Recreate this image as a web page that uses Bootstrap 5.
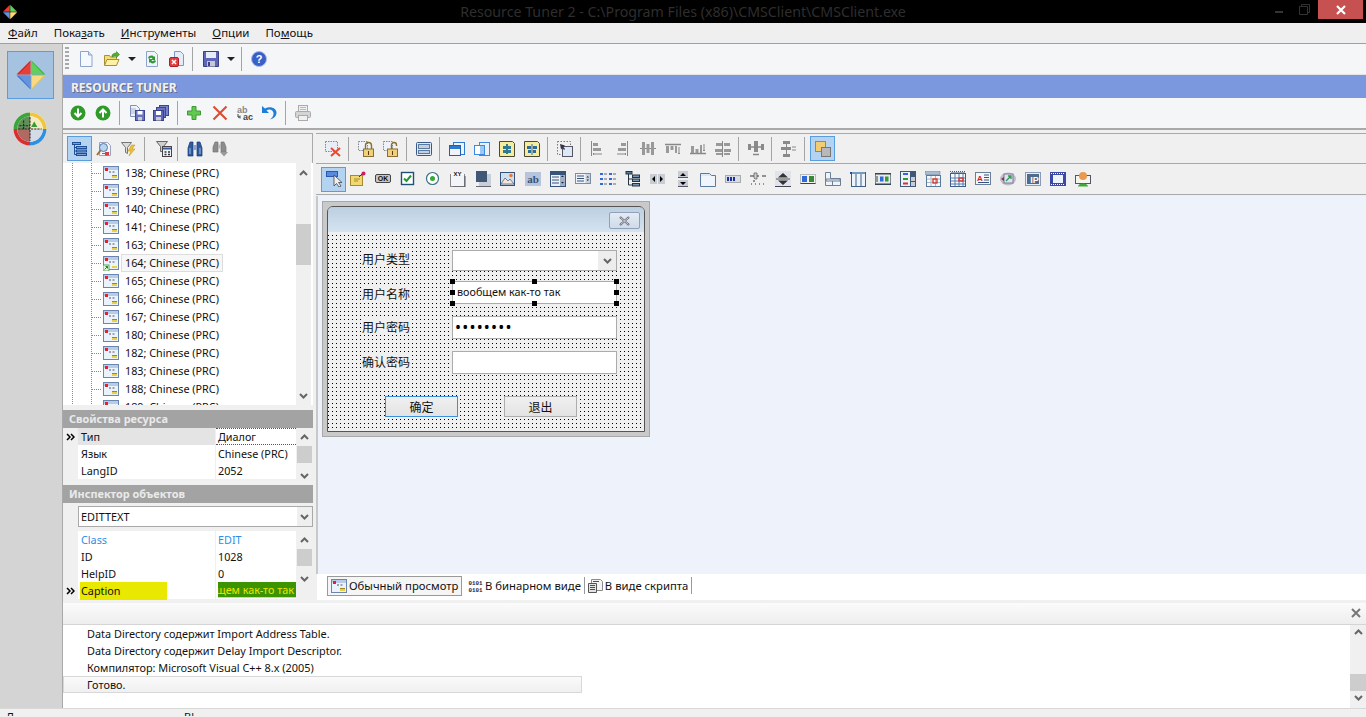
<!DOCTYPE html>
<html lang="ru">
<head>
<meta charset="utf-8">
<title>Resource Tuner 2</title>
<link href="https://cdn.jsdelivr.net/npm/bootstrap@5.3.0/dist/css/bootstrap.min.css" rel="stylesheet">
<style>
html,body{height:717px;overflow:hidden}
body{font:10.9px/1.2 "Noto Sans","Noto Sans CJK SC",sans-serif;color:#111;background:#f0f0f0}
svg{display:block;flex:none}
.ic{width:16px;height:16px}
.g2{margin-left:2px}.g3{margin-left:3px}.g4{margin-left:4px}.g5{margin-left:5px}.g6{margin-left:6px}.g7{margin-left:7px}.g8{margin-left:8px}.g9{margin-left:9px}.g10{margin-left:10px}.g11{margin-left:11px}
.titlebar{height:23px;background:#000;color:#2e2e2e;font-size:14.2px;position:relative}
.titlebar .ttl{width:100%;text-align:center;line-height:23px}
.winbtns{position:absolute;right:3px;top:0;display:flex;align-items:flex-start}
.wclose{width:45px;height:19px;background:#c75050;display:flex;align-items:center;justify-content:center}
.menubar{height:21px;background:#efefef;border-bottom:1px solid #a0a0a0;font-size:11.5px;padding-left:8px;gap:16px;align-items:center}
.menubar span{color:#111}
.menubar u{text-underline-offset:1px}
.appbody{height:665px}
.rail{width:63px;background:#d4d4d4;border-right:1px solid #a9a9a9;padding-top:7px}
.railbtn{width:47px;height:48px;margin-left:7px;background:#a5c3e0;border:1px solid #5a9ddd;display:flex;align-items:center;justify-content:center}
.railgauge{margin:13px 0 0 13px}
.tb1{height:31px;background:#f5f6f8;border-bottom:1px solid #e4e4e4}
.grip{width:4px;height:24px;background:repeating-linear-gradient(#a8a8a8 0 2px,transparent 2px 4px)}
.sepv{width:1px;height:24px;background:#a4a4a4;flex:none}
.arr{width:0;height:0;border:4px solid transparent;border-top:4px solid #222;border-bottom:0;flex:none}
.bluehead{height:23px;background:#7b97dd;color:#f3f3ea;font-weight:700;font-size:12px;line-height:25px;padding-left:8px;text-shadow:1px 1px 0 #6a6a80}
.tb2{height:32px;background:#f5f6f8;border-bottom:2px solid #a9a9a9}
.mainrow{height:473px;background:#f0f0f0}
.leftp{width:250px}
.rightp{width:1050px;margin-left:3px}
.tb3{height:30px;margin-top:3px;border-top:1px solid #a9a9a9;border-right:1px solid #a9a9a9;background:#f0f0f0}
.actbtn{width:25px;height:25px;background:#b4d3f0;border:1px solid #5a9ddd;display:flex;align-items:center;justify-content:center;flex:none}
.tree{height:242px;background:#fff;overflow:hidden;position:relative}
.treelist{width:233px;padding-top:1px;height:242px;overflow:hidden;background:repeating-linear-gradient(#8a8a8a 0 1px,#fff 1px 2px) 9px 0/1px 100% no-repeat,repeating-linear-gradient(#8a8a8a 0 1px,#fff 1px 2px) 28px 0/1px 100% no-repeat}
.trow{height:18px;display:flex;align-items:center}
.trow .dash{width:9px;margin:0 2px 0 29px;border-top:1px dotted #888}
.trow .nm{margin-left:2px;padding:0 3px;border:1px solid transparent;line-height:16px;white-space:nowrap;font-size:10.8px}
.trow .sel{background:#f7f7f7;border-color:#ddd}
.sb{width:15px;background:#f0f0f0;display:flex;flex-direction:column;align-items:center;flex:none;margin-left:auto;margin-right:1px}
.sb .th{width:100%;background:#cdcdcd}
.chev{width:9px;height:6px}
.sb-tree{margin-right:2px}
.th-tree{height:41px;margin:48px 0 128px}
.sb-tree .chev:first-child{margin-top:7px}
.panelhd{height:18px;background:#a3a3a3;color:#eaeaea;font-weight:700;line-height:18px;padding-left:6px}
.gap5{height:5px}
.gap6{height:6px}
.pgrid{background:#f0f0f0;font-size:10.8px}
.prow{height:17px;display:flex;align-items:center;line-height:17px}
.pind{width:15px;padding-left:3px;flex:none}
.pname{width:137px;background:#fff;padding-left:3px;height:17px;flex:none}
.pval{width:80px;background:#fff;margin-left:1px;padding-left:2px;height:17px;flex:none;white-space:nowrap;overflow:hidden}
.phead{background:#e4e4e4}
.pdot{border-top:1px dotted #555;border-bottom:1px dotted #555;line-height:15px}
.pblue{color:#2d8ee8}
.sb-grid{height:51px}
.sb-grid .chev:first-child{margin-top:6px}
.th-g{height:17px;margin:6px 0 10px}
.combo{height:21px;margin:3px 0 4px 15px;background:#fff;border:1px solid #a9a9a9;display:flex;align-items:center;padding-left:2px;font-size:10.9px}
.combobtn{margin-left:auto;width:15px;height:100%;background:#efefef;display:flex;align-items:center;justify-content:center}
.capname{background:#e8e800;width:87px;height:18px;padding-left:1px;margin-left:-1px;display:block}
.capval{background:#3c9400;color:#e8e800;width:78px;display:flex;justify-content:flex-end;height:16px;line-height:15px;overflow:hidden;white-space:nowrap;border-bottom:1px solid #e8e800;padding-right:2px}
.tb4,.tb5{background:#f0f0f0;border-top:1px solid #a9a9a9;align-items:center}
.tb4{height:30px;margin-top:3px}
.tb5{border-bottom:1px solid #a9a9a9;height:32px}
.canvas{height:378px;margin-top:1px;background:#eef2fa;border-left:2px solid #c8c8c8;position:relative}
.dlgframe{position:absolute;left:4px;top:5px;width:328px;height:236px;border:1px solid #a8a8a8;padding:4px;background:#c9c9c9}
.dlg{position:relative;height:226px;border:1px solid #555;border-radius:6px 6px 0 0;background:#f0f0f0 conic-gradient(at 1px 1px,#f0f0f0 75%,#000 0) 0 0/4px 4px;overflow:hidden}
.dlgtitle{height:25px;background:linear-gradient(#bccfe0,#d5e3f0)}
.dlgx{position:absolute;left:281px;top:5px;width:31px;height:17px;border:1px solid #8fa0b8;border-radius:2px;background:linear-gradient(#e4ebf3,#cfdbe8);display:flex;align-items:center;justify-content:center}
.lbl{position:absolute;left:34px;font-size:12px;line-height:16px;background:#f0f0f0;color:#111;font-family:"Noto Sans CJK SC",sans-serif;white-space:nowrap}
.fld{position:absolute;left:124px;width:165px;height:23px;background:#fff;border:1px solid #ababab;font-size:10.8px;line-height:20px;padding-left:4px}
.cmb{height:21px;display:flex;justify-content:flex-end}
.cmbb{width:18px;background:#ededed;display:flex;align-items:center;justify-content:center}
.dots{letter-spacing:1.2px;font-size:16px;line-height:20px;padding-left:2px;color:#000}
.btnx{position:absolute;width:73px;height:21px;top:189px;border:1px solid #adadad;background:linear-gradient(#f0f0f0,#e3e3e3);font:12px/19px "Noto Sans CJK SC",sans-serif;text-align:center;color:#111}
.btnok{left:57px;border-color:#3c8fdc}
.btnno{left:176px}
.hnd{position:absolute;width:5px;height:5px;background:#000}
.tabs{height:26px;background:#fff;margin-left:1px;padding:2px 0 0 10px;font-size:11.3px;align-items:flex-start}
.tabi{height:20px;display:flex;align-items:center;gap:2px;padding:0 3px;white-space:nowrap;flex:none}
.tabon{background:#f5f5f5;border:1px solid #9a9a9a;width:135px}
.tabt{border-right:1px solid #9a9a9a;height:17px;margin-top:1px;gap:1px}
.bottomp{height:106px;background:#fff}
.loghead{height:22px;background:linear-gradient(#fbfbfb,#eeeeee);border-bottom:1px solid #d5d5d5;position:relative}
.logx{position:absolute;right:3px;top:5px}
.logbody{height:84px}
.loglines{flex:1;position:relative}
.lline{height:17px;line-height:17px;padding-left:24px;white-space:nowrap}
.lcur{width:519px;height:17px;background:linear-gradient(#fafafa,#f0f0f0);border:1px solid #d8d8d8;line-height:15px;padding-left:23px}
.logsb{width:16px;background:#f0f0f0;display:flex;flex-direction:column;align-items:center;flex:none}
.logsb .chev:first-child{margin-top:4px}
.th-l{width:100%;height:17px;background:#cdcdcd;margin-top:39px}
.statusb{height:8px;background:#f0f0f0;border-top:1px solid #d8d8d8;overflow:hidden;position:relative;font-size:11px;line-height:16px;padding-left:6px;margin-top:-1px}
.statusb span{margin-right:170px}
</style>
</head>
<body>
<svg width="0" height="0" class="position-absolute">
<defs>
<symbol id="dia" viewBox="0 0 32 32"><path d="M15.5 1.5V15.500H1.500Z" fill="#d8201c"/><path d="M16.500 1.500V15.500H30.500Z" fill="#3cb83c"/><path d="M15.500 30.500V16.500H1.500Z" fill="#3f74c8"/><path d="M16.500 30.500V16.500H30.500Z" fill="#f2c24a"/><path d="M15.500 3V15H4Z" fill="#f26a5a" opacity=".45"/><path d="M17 3V15H28Z" fill="#92e88a" opacity=".45"/><path d="M15 29V17H4Z" fill="#8ab4ee" opacity=".5"/><path d="M17 29V17H28Z" fill="#fde9a8" opacity=".6"/></symbol>
<symbol id="gauge" viewBox="0 0 32 32"><circle cx="16" cy="16" r="15.500" fill="#fff"/><path d="M16 .5A15.500 15.500 0 0 0 .5 16H4A12 12 0 0 1 16 4Z" fill="#3aa63a"/><path d="M16 .5A15.500 15.500 0 0 1 31.500 16H28A12 12 0 0 0 16 4Z" fill="#f0c63c"/><path d="M.5 16A15.500 15.500 0 0 0 16 31.500V28A12 12 0 0 1 4 16Z" fill="#d83030"/><path d="M31.500 16A15.500 15.500 0 0 1 16 31.500V28A12 12 0 0 0 28 16Z" fill="#2f8fe0"/><path d="M16 4A12 12 0 0 0 4 16H16Z" fill="#5f9058"/><path d="M16 4A12 12 0 0 1 28 16H16Z" fill="#f4ecc0"/><path d="M4 16A12 12 0 0 0 16 28V16Z" fill="#b06a62"/><path d="M28 16A12 12 0 0 1 16 28V16Z" fill="#d4dbe6"/><path d="M5 16H27M16 5V27M6 13H16M10 8V16" stroke="#222" stroke-width="1" stroke-dasharray="2 1"/><path d="M20 9l3 5h-6z" fill="#3a9a3a"/></symbol>
<symbol id="new" viewBox="0 0 16 16"><path d="M2.500 .5h8l3.500 3.500v11.500h-11.500z" fill="#f4f8ff" stroke="#8ea4cc"/><path d="M10.500 .5v3.500h3.500" fill="#cfdcf2" stroke="#8ea4cc"/></symbol>
<symbol id="open" viewBox="0 0 16 16"><path d="M.5 4.500h5l1 1.500h6v8h-12z" fill="#f4dc78" stroke="#a89030"/><path d="M.5 14.500l2.500-6h12l-2.500 6z" fill="#fff0a8" stroke="#a89030"/><path d="M8 4c2-2 3-2 4.500-2V.5L15.500 3.500 12.500 6.500V5C10.500 5 9.500 5 8 6z" fill="#52b030" stroke="#2b7a18" stroke-width=".5"/></symbol>
<symbol id="refr" viewBox="0 0 16 16"><path d="M2.500 .5h8l3 3v12h-11z" fill="#eef4fc" stroke="#8ea4cc"/><path d="M4 7c1-3 5-3 6-1l1-1v4H7l1.500-1.500C8 6.500 6 6.500 5.500 8zM12 10c-1 3-5 3-6 1l-1 1V8h4l-1.500 1.500C8 10.500 10 10.500 10.500 9z" fill="#2f9a2f"/></symbol>
<symbol id="cdoc" viewBox="0 0 16 16"><path d="M5.500 .5h6l3 3v11h-9z" fill="#e4ecfa" stroke="#7e96c4"/><rect x=".5" y="6.500" width="9" height="9" rx="1.500" fill="#e04040" stroke="#b02020"/><path d="M3 9l4 4M7 9l-4 4" stroke="#fff" stroke-width="1.400"/></symbol>
<symbol id="save" viewBox="0 0 16 16"><path d="M.5 .5h15v15h-15z" fill="#5d66b8" stroke="#3a3f88"/><rect x="3" y="1" width="10" height="6" fill="#e8ecf8"/><rect x="4" y="10" width="8" height="5.500" fill="#c8c8d0"/><rect x="5" y="11" width="2" height="4" fill="#3a3f88"/></symbol>
<symbol id="help" viewBox="0 0 16 16"><circle cx="8" cy="8" r="7.500" fill="#3a5fc8" stroke="#a8b8e8"/><text x="8" y="12" font-size="11" font-weight="700" font-family="Liberation Sans" text-anchor="middle" fill="#fff">?</text></symbol>
<symbol id="gdown" viewBox="0 0 16 16"><circle cx="8" cy="8" r="7.500" fill="#2f9a2a"/><path d="M8 3.500v8M4.500 8 8 11.500 11.500 8" fill="none" stroke="#fff" stroke-width="2"/></symbol>
<symbol id="gup" viewBox="0 0 16 16"><circle cx="8" cy="8" r="7.500" fill="#2f9a2a"/><path d="M8 12.500v-8M4.500 8 8 4.500 11.500 8" fill="none" stroke="#fff" stroke-width="2"/></symbol>
<symbol id="copy1" viewBox="0 0 16 16"><path d="M1.500 .5h6l3 3v8h-9z" fill="#eef2fa" stroke="#8090b8"/><path d="M2 4h5M2 6h6M2 8h6" stroke="#a8b4d0"/><rect x="6.500" y="5.500" width="9" height="10" fill="#6a74c0" stroke="#3e4590"/><rect x="8.500" y="6" width="5" height="3.500" fill="#fff"/><rect x="9" y="12" width="4" height="3.500" fill="#ccc"/></symbol>
<symbol id="copy2" viewBox="0 0 16 16"><rect x="6.500" y=".5" width="9" height="10" fill="#7a82c8" stroke="#3e4590"/><rect x="3.500" y="2.500" width="9" height="10" fill="#6a74c0" stroke="#3e4590"/><rect x=".5" y="5.500" width="10" height="10" fill="#5d66b8" stroke="#3a3f88"/><rect x="3" y="6" width="5" height="4" fill="#fff"/><rect x="3" y="12" width="5" height="3.500" fill="#ccc"/></symbol>
<symbol id="plus" viewBox="0 0 16 16"><path d="M6 1.500h4V6h4.500v4H10v4.500H6V10H1.500V6H6z" fill="#63c850" stroke="#3d9a30"/></symbol>
<symbol id="rx" viewBox="0 0 16 16"><path d="M1.500 1.500l13 13M14.500 1.500l-13 13" stroke="#dd4a30" stroke-width="2"/></symbol>
<symbol id="abc" viewBox="0 0 16 16"><text x="0" y="7.500" font-size="9" font-weight="700" font-family="Liberation Sans" fill="#888">ab</text><text x="6" y="15" font-size="9" font-weight="700" font-family="Liberation Sans" fill="#444">ac</text><path d="M1 9v3h3M3 10.500 1.500 12 3 13.500" fill="none" stroke="#444"/></symbol>
<symbol id="undo" viewBox="0 0 16 16"><path d="M1 1v7h7L5.500 5.500C8 3.500 12 4.500 12.500 8c.3 2.500-1 4.500-3.500 6.500 4-1 6.500-3.500 6.500-7C15.500 3 9 .5 4 3.500z" fill="#1f7fd8"/></symbol>
<symbol id="print" viewBox="0 0 16 16"><rect x="3.500" y=".5" width="9" height="6" fill="#f0f0f0" stroke="#aaa"/><rect x=".5" y="6.500" width="15" height="6" rx="1" fill="#d4d4d4" stroke="#aaa"/><rect x="3.500" y="10.500" width="9" height="5" fill="#f0f0f0" stroke="#aaa"/><path d="M5 2.500h6M5 4.500h6" stroke="#bbb"/></symbol>
<symbol id="treei" viewBox="0 0 16 16"><g fill="#7ba0d8" stroke="#1f4f96"><rect x=".5" y="1.500" width="8" height="2"/><rect x="4.500" y="5.500" width="10" height="2"/><rect x="4.500" y="9" width="10" height="2"/><rect x="4.500" y="12.500" width="10" height="2"/></g><path d="M2.500 3.500v10h2M2.500 6.500h2M2.500 10h2" fill="none" stroke="#1f4f96"/></symbol>
<symbol id="srch" viewBox="0 0 16 16"><path d="M3.500 1.500h8l3 3v10h-11z" fill="#f4f4fa" stroke="#9aa4c0"/><circle cx="7.500" cy="6.500" r="4" fill="#b8d4f0" stroke="#5a7aa8"/><path d="M4.500 9.500 1 14" stroke="#a07038" stroke-width="2"/><rect x="9" y="11" width="4" height="3.500" fill="#d84040"/><path d="M6 12.500h4" stroke="#3a9a3a"/></symbol>
<symbol id="filt" viewBox="0 0 16 16"><path d="M.5 1.500h10l-4 5v6l-2-1v-5z" fill="#dcdcdc" stroke="#777"/><path d="M10.500 4 7 10h3l-2 5 6-7h-3l3-4z" fill="#f0c030" stroke="#c09010" stroke-width=".5"/></symbol>
<symbol id="filt2" viewBox="0 0 16 16"><path d="M.5 .5h11l-4 5v5l-3 0v-5z" fill="#cfcfcf" stroke="#666"/><rect x="6.500" y="5.500" width="9" height="10" fill="#eef2fa" stroke="#444"/><path d="M7 6.500h8v2H7z" fill="#3c5a98"/><path d="M8.500 11h2M12 11h2M8.500 13.500h2M12 13.500h2" stroke="#333" stroke-width="1.400"/></symbol>
<symbol id="bin" viewBox="0 0 16 16"><path d="M1 15V7l2-6h3v14zM15 15V7l-2-6h-3v14z" fill="#2f5a9c" stroke="#123a78" stroke-width=".7"/><rect x="6" y="4" width="4" height="5" fill="#8aa4cc"/><path d="M3 7v6M13 7v6" stroke="#a8c0e8"/></symbol>
<symbol id="bin2" viewBox="0 0 16 16"><path d="M1 11V6l2-5h3v10zM14 11V6l-2-5H9v10z" fill="#8c8c8c" stroke="#777" stroke-width=".7"/><rect x="6" y="3.500" width="3" height="4" fill="#bbb"/><path d="M8 11h8l-4 4.500z" fill="#999"/></symbol>
<symbol id="dx" viewBox="0 0 16 16"><rect x=".5" y=".5" width="12" height="10" fill="#e8eef8" stroke="#888" stroke-dasharray="1.500 1"/><path d="M6 7l9 8M15 7l-9 8" stroke="#e84a30" stroke-width="2"/></symbol>
<symbol id="lock" viewBox="0 0 16 16"><rect x=".5" y=".5" width="9" height="9" fill="#eef2fa" stroke="#888" stroke-dasharray="1.500 1"/><path d="M7.500 8V4.500a3 3 0 0 1 6 0V8" fill="none" stroke="#8a7030" stroke-width="1.400"/><rect x="5.500" y="8" width="10" height="7.500" fill="#f0d078" stroke="#8a7030"/><rect x="10" y="10" width="1" height="4" fill="#5a4010"/></symbol>
<symbol id="unlk" viewBox="0 0 16 16"><rect x=".5" y=".5" width="9" height="9" fill="#eef2fa" stroke="#888" stroke-dasharray="1.500 1"/><path d="M8.500 8V4a2.500 2.500 0 0 1 5 0v1" fill="none" stroke="#8a7030" stroke-width="1.400"/><rect x="4.500" y="8" width="10" height="7.500" fill="#f0d078" stroke="#8a7030"/><rect x="9" y="10" width="1" height="4" fill="#5a4010"/></symbol>
<symbol id="form" viewBox="0 0 16 16"><rect x=".5" y="1.500" width="15" height="13" rx="1" fill="#dfe8f4" stroke="#3c5a88"/><rect x="2.500" y="3.500" width="11" height="4" fill="#c4d0e0" stroke="#5a7aa0"/><rect x="2.500" y="9.500" width="11" height="3" fill="#c4d0e0" stroke="#5a7aa0"/></symbol>
<symbol id="wina" viewBox="0 0 16 16"><rect x="4.500" y="1.500" width="11" height="12" fill="#eef4fc" stroke="#2f7ad0"/><rect x=".5" y="4.500" width="11" height="10" fill="#f0f4fa" stroke="#2060a8"/><rect x="1" y="5" width="10" height="3" fill="#2f7ad0"/></symbol>
<symbol id="winb" viewBox="0 0 16 16"><rect x="5.500" y="1.500" width="10" height="13" fill="#eaf2fc" stroke="#3f8ae0"/><rect x=".5" y="4.500" width="10" height="9" fill="#fff" stroke="#3f8ae0"/><rect x="6" y="5" width="4" height="8" fill="#9cc8f4"/></symbol>
<symbol id="yel1" viewBox="0 0 16 16"><path d="M.5 .5h13l2 2v13H.5z" fill="#f8ec9c" stroke="#4a4a30"/><path d="M4 5h3V3h2v2h3v3H9v1h3v3H9v1H7v-1H4V9h3V8H4z" fill="#2f7a90"/></symbol>
<symbol id="yel2" viewBox="0 0 16 16"><path d="M.5 .5h13l2 2v13H.5z" fill="#f8ec9c" stroke="#4a4a30"/><path d="M3 5h4V3h2v2h4v3H9v1h3v3H9v2H7v-2H4V9h3V8H3z" fill="#2f6a9a"/><path d="M8 2v12" stroke="#f8ec9c"/></symbol>
<symbol id="tab" viewBox="0 0 16 16"><rect x=".5" y=".5" width="13" height="13" fill="none" stroke="#777" stroke-dasharray="1.500 1.500"/><rect x="5.500" y="5.500" width="10" height="10" fill="#dde8f6" stroke="#556"/><path d="M3 3l5 1.500L6.500 6 8 8 7 9 5.500 7 4 8.500z" fill="#334"/></symbol>
<symbol id="al1" viewBox="0 0 16 16"><path d="M2.500 0v15" stroke="#888"/><path d="M4 2h5v3H4zM4 7h8v3H4z" fill="#999"/><path d="M4 13h9M5 12l-1 1 1 1" stroke="#888" fill="none"/></symbol>
<symbol id="al2" viewBox="0 0 16 16"><path d="M13.500 0v15" stroke="#888"/><path d="M7 2h5v3H7zM4 7h8v3H4z" fill="#999"/><path d="M3 13h9M11 12l1 1-1 1" stroke="#888" fill="none"/></symbol>
<symbol id="al3" viewBox="0 0 16 16"><path d="M0 7.500h16" stroke="#888"/><path d="M2 1h3v13H2zM6.500 3h3v9h-3zM11 1h3v13h-3z" fill="#999"/></symbol>
<symbol id="al4" viewBox="0 0 16 16"><path d="M0 3.500h16" stroke="#888" stroke-width="1.500"/><path d="M1 5h3v7H1zM5.500 5h3v4h-3zM10 5h2v7h-2z" fill="#999"/><path d="M14 6v7M13 12l1 1 1-1" stroke="#888" fill="none"/></symbol>
<symbol id="al5" viewBox="0 0 16 16"><path d="M0 12.500h16" stroke="#888" stroke-width="1.500"/><path d="M1 5h3v7H1zM5.500 8h3v4h-3zM10 4h2v8h-2z" fill="#999"/><path d="M14 3v7M13 9l1 1 1-1" stroke="#888" fill="none"/></symbol>
<symbol id="al6" viewBox="0 0 16 16"><path d="M7.500 0v16" stroke="#888"/><path d="M1 2h6v3H1zM9 2h6v3H9zM0 8h7v3H0zM9 8h7v3H9zM1 12h6v2H1zM9 12h6v2H9z" fill="#999"/></symbol>
<symbol id="al7" viewBox="0 0 16 16"><path d="M0 3h3v6H0zM13 3h3v6h-3zM6 0h4v11H6z" fill="#8a8a8a"/><path d="M3 6h10M5 13.500h6" stroke="#888" stroke-width="1.500"/></symbol>
<symbol id="al8" viewBox="0 0 16 16"><path d="M3 0h7v3H3zM1 6h10v3H1zM3 13h7v3H3zM6 3h1v10H6z" fill="#8a8a8a"/><path d="M12 6h4M12 9h4" stroke="#888"/></symbol>
<symbol id="bring" viewBox="0 0 16 16"><rect x=".5" y=".5" width="10" height="10" fill="#f2cc72" stroke="#a88830"/><rect x="6.500" y="6.500" width="9" height="9" fill="#b8b8b8" stroke="#777"/></symbol>
<symbol id="ptr" viewBox="0 0 16 16"><rect x=".5" y=".5" width="11" height="5" fill="#5a8ae0" stroke="#2a5ab0"/><path d="M8 4v11l2.500-2.500L13 16l2-1-2.500-3.500H16z" fill="#f0f0f0" stroke="#444" stroke-width=".8"/></symbol>
<symbol id="note" viewBox="0 0 16 16"><rect x=".5" y="4.500" width="12" height="10" fill="#f2d870" stroke="#a88830"/><path d="M4 8h6M4 10h4" stroke="#a88830"/><path d="M9 6l4-4" stroke="#333"/><circle cx="13.500" cy="2.500" r="2" fill="#c82060"/></symbol>
<symbol id="okb" viewBox="0 0 16 16"><rect x=".5" y="3.500" width="15" height="8" rx="1.500" fill="#c8c8c8" stroke="#444"/><text x="8" y="10" font-size="7" font-weight="700" font-family="Liberation Sans" text-anchor="middle" fill="#111">OK</text></symbol>
<symbol id="chk" viewBox="0 0 16 16"><rect x="1.500" y="1.500" width="12" height="12" fill="#fff" stroke="#1f5078" stroke-width="1.400"/><path d="M4 7.500l2.500 2.500L11 4.500" fill="none" stroke="#1f9a30" stroke-width="2"/></symbol>
<symbol id="rad" viewBox="0 0 16 16"><circle cx="7.500" cy="7.500" r="6" fill="#fff" stroke="#3a7088" stroke-width="1.200"/><circle cx="7.500" cy="7.500" r="2.500" fill="#36a838"/></symbol>
<symbol id="grp" viewBox="0 0 16 16"><rect x=".5" y="3.500" width="14" height="12" fill="#f2f4f8" stroke="#888"/><rect x="1" y="3" width="13" height="1" fill="#fff"/><text x="7.500" y="4.500" font-size="6" font-weight="700" font-family="Liberation Sans" text-anchor="middle" fill="#111">XY</text><path d="M15 5v11H3" fill="none" stroke="#556"/></symbol>
<symbol id="shd" viewBox="0 0 16 16"><path d="M4 3h12v12H4z" fill="#c9cfd8"/><rect x="1" y="0" width="11" height="11" fill="#3f5878"/><path d="M1 15.500h15" stroke="#667"/></symbol>
<symbol id="pic" viewBox="0 0 16 16"><rect x=".5" y="1.500" width="14" height="13" fill="#cfe0f0" stroke="#34527a"/><path d="M1 13l4-6 3 3 2-2 4 5z" fill="#f0e8e0" stroke="#5a4a5a" stroke-width=".7"/><circle cx="11" cy="4.500" r="1.800" fill="#f07830"/></symbol>
<symbol id="abbx" viewBox="0 0 16 16"><rect width="16" height="14" y="1" fill="#b8c4dc"/><text x="8" y="12" font-size="11" font-weight="700" font-family="Liberation Serif" text-anchor="middle" fill="#34527a">ab</text></symbol>
<symbol id="lst1" viewBox="0 0 16 16"><rect x=".5" y=".5" width="15" height="15" fill="#eef2f8" stroke="#34527a"/><path d="M2 3h7M2 6h7M2 9h7M2 12h7" stroke="#34527a"/><rect x="10" y="1" width="5" height="14" fill="#9fb0c8"/><path d="M1 1h14v3H1z" fill="#34527a"/><path d="M11 6l1.500-1.500L14 6zM11 11l1.500 1.500L14 11z" fill="#123"/></symbol>
<symbol id="lst2" viewBox="0 0 16 16"><rect x=".5" y="2.500" width="15" height="10" fill="#eef2f8" stroke="#7a8ea8"/><path d="M2 5h7M2 7.500h7M2 10h7" stroke="#34527a"/><rect x="10.500" y="3" width="4.500" height="9" fill="#c8d0dc"/><path d="M11.500 6.500l1.300-1.500L14 6.500zM11.500 8.500l1.300 1.500L14 8.500z" fill="#123"/></symbol>
<symbol id="opts" viewBox="0 0 16 16"><g fill="#2f6ad8"><rect x="0" y="2" width="3" height="2"/><rect x="0" y="7" width="3" height="2"/><rect x="0" y="12" width="3" height="2"/><rect x="9" y="2" width="3" height="2"/><rect x="9" y="7" width="3" height="2"/><rect x="9" y="12" width="3" height="2"/></g><path d="M4 3h3M4 8h3M4 13h3M13 3h3M13 8h3M13 13h3" stroke="#667"/></symbol>
<symbol id="tre2" viewBox="0 0 16 16"><rect x="1" y=".5" width="6" height="2.500" fill="#5a7a9a" stroke="#234"/><path d="M3.500 3v11h4M3.500 8h4" stroke="#234" fill="none"/><rect x="7.500" y="4" width="7" height="2.500" fill="#7a96b4" stroke="#234"/><rect x="7.500" y="8" width="7" height="2.500" fill="#7a96b4" stroke="#234"/><rect x="7.500" y="12.500" width="7" height="2.500" fill="#7a96b4" stroke="#234"/></symbol>
<symbol id="spinh" viewBox="0 0 16 16"><rect y="3" width="7" height="10" fill="#c8ccd4"/><rect x="8" y="3" width="7" height="10" fill="#c8ccd4"/><path d="M5 5 2 8l3 3zM10 5l3 3-3 3z" fill="#000"/></symbol>
<symbol id="spinv" viewBox="0 0 16 16"><rect x="3" width="10" height="7" fill="#c8ccd4"/><rect x="3" y="9" width="10" height="7" fill="#c8ccd4"/><path d="M5 5l3-3 3 3zM5 11l3 3 3-3z" fill="#000"/><rect x="3" y="6" width="10" height="1" fill="#556"/><rect x="3" y="15" width="10" height="1" fill="#556"/></symbol>
<symbol id="fold" viewBox="0 0 16 16"><path d="M.5 2.500h9l2 2h4v11H.5z" fill="#dce8f8" stroke="#5a7aa0"/><path d="M1 5h14v10H1z" fill="#f0f5fc"/></symbol>
<symbol id="prog" viewBox="0 0 16 16"><rect x=".5" y="4.500" width="15" height="7" fill="#d8dce4" stroke="#aaa"/><path d="M2 6h2v4H2zM5 6h2v4H5zM8 6h2v4H8z" fill="#20309a"/></symbol>
<symbol id="trak" viewBox="0 0 16 16"><path d="M0 5h9M12 5h4" stroke="#333"/><path d="M4 2h3v6H5L4 7z" fill="#cfcfcf" stroke="#555" stroke-width=".7"/><path d="M1 13h1M5 13h1M9 13h1M13 13h1M4 9v2" stroke="#333"/></symbol>
<symbol id="updn" viewBox="0 0 16 16"><rect width="16" height="15" fill="#e0e4ea"/><path d="M3 6.500 8 2l5 4.500zM3 9.500 8 14l5-4.500z" fill="#333"/><path d="M1 8h14" stroke="#555"/><path d="M0 15.500h16" stroke="#445"/></symbol>
<symbol id="hdr1" viewBox="0 0 16 16"><rect x=".5" y="3.500" width="15" height="9" fill="#f2f2ee" stroke="#bbb"/><rect x="2" y="5" width="5" height="6" fill="#2f6ad8"/><rect x="9" y="5" width="5" height="6" fill="#38883a"/><path d="M.5 12.500h15" stroke="#345"/></symbol>
<symbol id="hdr2" viewBox="0 0 16 16"><path d="M.5 1.500v13h15V7.500H5.500v-6z" fill="#f0f4f8" stroke="#6a7e98"/><path d="M1 8h14v2H1zM7.500 10v4" stroke="#6a7e98" fill="none"/></symbol>
<symbol id="cols" viewBox="0 0 16 16"><rect x="1.500" y="1.500" width="14" height="14" fill="#eef4fc" stroke="#3f5f8a"/><path d="M6 2v13M11 2v13" stroke="#3f5f8a"/><rect x="2" y="1" width="13" height="2" fill="#7a9abc"/><rect x="0" y="1" width="2" height="2" fill="#2050c0"/></symbol>
<symbol id="anim" viewBox="0 0 16 16"><rect x=".5" y="2.500" width="15" height="11" fill="#e8ebe6" stroke="#7a8a90"/><rect x="0" y="2" width="16" height="1.500" fill="#345"/><rect x="0" y="12.500" width="16" height="1.500" fill="#345"/><rect x="5" y="5.500" width="3.500" height="5" fill="#2f6ad8"/><rect x="10" y="5.500" width="3.500" height="5" fill="#38983a"/><path d="M2 5v6" stroke="#345"/></symbol>
<symbol id="tabc" viewBox="0 0 16 16"><rect width="16" height="16" fill="#3f5878"/><rect x="1" y="1" width="9" height="14" fill="#eef2f8"/><path d="M3 3h5" stroke="#2f6ad8" stroke-width="2"/><path d="M3 8h5" stroke="#2f9a2f" stroke-width="2"/><path d="M3 12.500h5" stroke="#d83030" stroke-width="2"/><rect x="11" y="6" width="4" height="4" fill="#c8ccd4"/><rect x="11" y="11" width="4" height="4" fill="#c8ccd4"/></symbol>
<symbol id="cald" viewBox="0 0 16 16"><rect x="1.500" y="4.500" width="14" height="11" fill="#f8fafc" stroke="#5a7a9a"/><path d="M6 5v10M10.500 5v10M2 8h13M2 11.500h13" stroke="#a8b8cc"/><rect x="8" y="8" width="4" height="4" fill="none" stroke="#d83020" stroke-width="1.300"/><rect x="0" y="0" width="15" height="3.500" fill="#a8bcd4" stroke="#5a7a9a" stroke-width=".5"/></symbol>
<symbol id="cal2" viewBox="0 0 16 16"><rect x=".5" y="2.500" width="15" height="13" fill="#f8fafc" stroke="#3f5f8a"/><path d="M5 3v12M9 3v12M13 3v12M1 7h14M1 10h14M1 13h14" stroke="#5a7ab0"/><rect x="1" y="1.500" width="14" height="1.500" fill="#3f5f8a"/><path d="M0 .5h16" stroke="#3f5f8a" stroke-dasharray="1 1"/><rect x="9" y="7" width="4" height="3" fill="none" stroke="#d83020" stroke-width="1.200"/></symbol>
<symbol id="rich" viewBox="0 0 16 16"><rect x=".5" y="1.500" width="15" height="12" fill="#f4f6fa" stroke="#6a7e98"/><text x="5" y="10" font-size="8" font-weight="700" font-family="Liberation Sans" text-anchor="middle" fill="#d82020">A</text><path d="M9 4h5M9 6.500h5M9 9h5M3 11.500h11" stroke="#34527a"/></symbol>
<symbol id="ipad" viewBox="0 0 16 16"><ellipse cx="8" cy="8" rx="8" ry="6.500" fill="#c0bcc8"/><rect x="4" y="3" width="9" height="9" fill="#dce4f0" stroke="#7a7a9a"/><path d="M6 10l5-5M8 5h3v3" fill="none" stroke="#2f9a4a" stroke-width="1.300"/><path d="M1 8l3-2v4z" fill="#883050"/></symbol>
<symbol id="ipb" viewBox="0 0 16 16"><rect x=".5" y="1.500" width="15" height="13" fill="#e8eef8" stroke="#8a9ab8"/><rect x="2" y="3" width="12" height="10" fill="#506a88"/><text x="9.500" y="11.500" font-size="9" font-weight="700" font-family="Liberation Sans" text-anchor="middle" fill="#fff">IP</text></symbol>
<symbol id="film" viewBox="0 0 16 16"><rect y="1" width="16" height="14" fill="#3a48a8"/><rect x="3" y="4" width="10" height="8" fill="#eef2fa"/><path d="M1 2.500h14M1 13.500h14" stroke="#fff" stroke-dasharray="1 1"/></symbol>
<symbol id="user" viewBox="0 0 16 16"><rect x=".5" y="4.500" width="15" height="8" fill="#f4f4f0" stroke="#556"/><circle cx="8" cy="5" r="4" fill="#e89a50"/><path d="M3 15.500c0-4 10-4 10 0z" fill="#3fa83a"/></symbol>
<symbol id="dlgi" viewBox="0 0 16 16"><rect x=".5" y="1.500" width="15" height="13" fill="#eaf2fc" stroke="#6a86b0"/><rect x="1" y="2" width="14" height="3" fill="#b8cce8"/><rect x="2" y="3" width="3" height="3" fill="#e8202c"/><path d="M6 7h2M9.500 7h2" stroke="#556"/><path d="M9 11h5v2H9z" fill="#e6d24a"/><path d="M9 10.500h5" stroke="#998a20"/></symbol>
<symbol id="dlgg" viewBox="0 0 16 16"><rect x=".5" y="1.500" width="15" height="13" fill="#eaf2fc" stroke="#6a86b0"/><rect x="1" y="2" width="14" height="3" fill="#b8cce8"/><rect x="2" y="3" width="3" height="3" fill="#e8202c"/><path d="M6 7h2M9.500 7h2" stroke="#556"/><path d="M9 11h5v2H9z" fill="#e6d24a"/><rect x="0" y="10" width="6" height="6" fill="#eaf6e6" stroke="#3a9a3a" stroke-width=".8"/><path d="M1.500 14.500l3-3M2.500 11.500h2v2" fill="none" stroke="#1f8a1f"/></symbol>
<symbol id="bini" viewBox="0 0 16 16"><text x="7.500" y="7" font-size="5.800" font-weight="700" font-family="Liberation Mono" text-anchor="middle" fill="#223">0101</text><text x="7.500" y="14" font-size="5.800" font-weight="700" font-family="Liberation Mono" text-anchor="middle" fill="#223">0101</text></symbol>
<symbol id="scr" viewBox="0 0 16 16"><path d="M3.500 1.500h9l2 2v9h-11z" fill="#f4f4f4" stroke="#8a8a8a"/><path d="M.5 5.500h8v9h-8z" fill="#e4e4e4" stroke="#555"/><path d="M2 7.500h5M2 9.500h5M2 11.500h5M5 3.500h6" stroke="#34527a"/></symbol>
<symbol id="cv" viewBox="0 0 9 6"><path d="M1 5l3.500-3.500L8 5" fill="none" stroke="#666" stroke-width="2"/></symbol>
<symbol id="cd" viewBox="0 0 9 6"><path d="M1 1l3.500 3.500L8 1" fill="none" stroke="#666" stroke-width="2"/></symbol>
<symbol id="wx" viewBox="0 0 16 10"><path d="M4 1l8 8M12 1l-8 8" stroke="#fff" stroke-width="2.200"/></symbol>
<symbol id="dx2" viewBox="0 0 16 10"><path d="M3 1l9 8M12 1l-9 8" stroke="#667" stroke-width="2.200"/><path d="M3.500 1.500l8 7M11.500 1.500l-8 7" stroke="#fff" stroke-width=".7"/></symbol>
<symbol id="ind" viewBox="0 0 9 8"><path d="M1 1l3 3-3 3M5 1l3 3-3 3" fill="none" stroke="#000" stroke-width="1.500"/></symbol>
</defs>
</svg>

<div class="titlebar d-flex">
  <svg class="ic g2 mt-1" viewBox="0 0 16 16"><use href="#dia" width="16" height="16"/></svg>
  <div class="ttl position-absolute">Resource Tuner 2 - C:\Program Files (x86)\CMSClient\CMSClient.exe</div>
  <div class="winbtns">
    <svg width="8" height="14" class="me-3"><rect y="11" width="8" height="2" fill="#333"/></svg>
    <svg width="11" height="11" class="mt-1 me-2"><path d="M.5 2.500h8v8h-8zM2.500 2.500v-2h8v8h-2" fill="none" stroke="#333"/></svg>
    <div class="wclose"><svg width="16" height="10"><use href="#wx"/></svg></div>
  </div>
</div>

<nav class="menubar d-flex">
  <span><u>Ф</u>айл</span><span>Пока<u>з</u>ать</span><span><u>И</u>нструменты</span><span><u>О</u>пции</span><span>По<u>м</u>ощь</span>
</nav>

<div class="appbody d-flex">
  <aside class="rail">
    <div class="railbtn"><svg width="32" height="32"><use href="#dia"/></svg></div>
    <svg width="34" height="34" class="railgauge"><use href="#gauge"/></svg>
  </aside>
  <main class="flex-grow-1 d-flex flex-column">
    <div class="tb1 d-flex align-items-center">
      <div class="grip g2"></div>
      <svg class="ic g9"><use href="#new"/></svg>
      <svg class="ic g10"><use href="#open"/></svg>
      <div class="arr g8"></div>
      <svg class="ic g8"><use href="#refr"/></svg>
      <svg class="ic g9"><use href="#cdoc"/></svg>
      <div class="sepv g7"></div>
      <svg class="ic g10"><use href="#save"/></svg>
      <div class="arr g8"></div>
      <div class="sepv g6"></div>
      <svg class="ic g9"><use href="#help"/></svg>
    </div>
    <div class="bluehead">RESOURCE TUNER</div>
    <div class="tb2 d-flex align-items-center">
      <svg class="ic g7"><use href="#gdown"/></svg>
      <svg class="ic g9"><use href="#gup"/></svg>
      <div class="sepv g8"></div>
      <svg class="ic g9"><use href="#copy1"/></svg>
      <svg class="ic g8"><use href="#copy2"/></svg>
      <div class="sepv g8"></div>
      <svg class="ic g8"><use href="#plus"/></svg>
      <svg class="ic g10"><use href="#rx"/></svg>
      <svg class="ic g9"><use href="#abc"/></svg>
      <svg class="ic g8"><use href="#undo"/></svg>
      <div class="sepv g8"></div>
      <svg class="ic g9"><use href="#print"/></svg>
    </div>
    <div class="mainrow d-flex">
      <section class="leftp d-flex flex-column">
        <div class="tb3 d-flex align-items-center">
          <div class="actbtn g4"><svg class="ic"><use href="#treei"/></svg></div>
          <svg class="ic g4"><use href="#srch"/></svg>
          <svg class="ic g9"><use href="#filt"/></svg>
          <div class="sepv g7"></div>
          <svg class="ic g11"><use href="#filt2"/></svg>
          <div class="sepv g5"></div>
          <svg class="ic g9"><use href="#bin"/></svg>
          <svg class="ic g9"><use href="#bin2"/></svg>
        </div>
        <div class="tree d-flex">
          <div class="treelist">
            <div class="trow"><i class="dash"></i><svg class="ic"><use href="#dlgi"/></svg><span class="nm">138; Chinese (PRC)</span></div>
            <div class="trow"><i class="dash"></i><svg class="ic"><use href="#dlgi"/></svg><span class="nm">139; Chinese (PRC)</span></div>
            <div class="trow"><i class="dash"></i><svg class="ic"><use href="#dlgi"/></svg><span class="nm">140; Chinese (PRC)</span></div>
            <div class="trow"><i class="dash"></i><svg class="ic"><use href="#dlgi"/></svg><span class="nm">141; Chinese (PRC)</span></div>
            <div class="trow"><i class="dash"></i><svg class="ic"><use href="#dlgi"/></svg><span class="nm">163; Chinese (PRC)</span></div>
            <div class="trow"><i class="dash"></i><svg class="ic"><use href="#dlgg"/></svg><span class="nm sel">164; Chinese (PRC)</span></div>
            <div class="trow"><i class="dash"></i><svg class="ic"><use href="#dlgi"/></svg><span class="nm">165; Chinese (PRC)</span></div>
            <div class="trow"><i class="dash"></i><svg class="ic"><use href="#dlgi"/></svg><span class="nm">166; Chinese (PRC)</span></div>
            <div class="trow"><i class="dash"></i><svg class="ic"><use href="#dlgi"/></svg><span class="nm">167; Chinese (PRC)</span></div>
            <div class="trow"><i class="dash"></i><svg class="ic"><use href="#dlgi"/></svg><span class="nm">180; Chinese (PRC)</span></div>
            <div class="trow"><i class="dash"></i><svg class="ic"><use href="#dlgi"/></svg><span class="nm">182; Chinese (PRC)</span></div>
            <div class="trow"><i class="dash"></i><svg class="ic"><use href="#dlgi"/></svg><span class="nm">183; Chinese (PRC)</span></div>
            <div class="trow"><i class="dash"></i><svg class="ic"><use href="#dlgi"/></svg><span class="nm">188; Chinese (PRC)</span></div>
            <div class="trow"><i class="dash"></i><svg class="ic"><use href="#dlgi"/></svg><span class="nm">189; Chinese (PRC)</span></div>
          </div>
          <div class="sb sb-tree">
            <svg class="chev"><use href="#cv"/></svg>
            <div class="th th-tree"></div>
            <svg class="chev"><use href="#cd"/></svg>
          </div>
        </div>
        <div class="gap5"></div>
        <div class="panelhd">Свойства ресурса</div>
        <div class="pgrid d-flex">
          <div class="flex-grow-1">
            <div class="prow"><span class="pind"><svg width="9" height="8"><use href="#ind"/></svg></span><span class="pname phead">Тип</span><span class="pval pdot">Диалог</span></div>
            <div class="prow"><span class="pind"></span><span class="pname">Язык</span><span class="pval">Chinese (PRC)</span></div>
            <div class="prow"><span class="pind"></span><span class="pname">LangID</span><span class="pval">2052</span></div>
          </div>
          <div class="sb sb-grid"><svg class="chev"><use href="#cv"/></svg><div class="th th-g"></div><svg class="chev"><use href="#cd"/></svg></div>
        </div>
        <div class="gap6"></div>
        <div class="panelhd">Инспектор объектов</div>
        <div class="combo">EDITTEXT<span class="combobtn"><svg class="chev"><use href="#cd"/></svg></span></div>
        <div class="pgrid d-flex">
          <div class="flex-grow-1">
            <div class="prow"><span class="pind"></span><span class="pname pblue">Class</span><span class="pval pblue">EDIT</span></div>
            <div class="prow"><span class="pind"></span><span class="pname">ID</span><span class="pval">1028</span></div>
            <div class="prow"><span class="pind"></span><span class="pname">HelpID</span><span class="pval">0</span></div>
            <div class="prow"><span class="pind"><svg width="9" height="8"><use href="#ind"/></svg></span><span class="pname"><span class="capname">Caption</span></span><span class="pval"><span class="capval">вообщем как-то так</span></span></div>
          </div>
          <div class="sb sb-grid"><svg class="chev"><use href="#cv"/></svg><div class="th th-g"></div><svg class="chev"><use href="#cd"/></svg></div>
        </div>
      </section>
      <section class="rightp d-flex flex-column">
        <div class="tb4 d-flex">
          <svg class="ic g9"><use href="#dx"/></svg>
          <div class="sepv g7"></div>
          <svg class="ic g9"><use href="#lock"/></svg>
          <svg class="ic g9"><use href="#unlk"/></svg>
          <div class="sepv g7"></div>
          <svg class="ic g9"><use href="#form"/></svg>
          <div class="sepv g7"></div>
          <svg class="ic g9"><use href="#wina"/></svg>
          <svg class="ic g9"><use href="#winb"/></svg>
          <svg class="ic g9"><use href="#yel1"/></svg>
          <svg class="ic g9"><use href="#yel2"/></svg>
          <div class="sepv g7"></div>
          <svg class="ic g9"><use href="#tab"/></svg>
          <div class="sepv g7"></div>
          <svg class="ic g8"><use href="#al1"/></svg>
          <svg class="ic g9"><use href="#al2"/></svg>
          <svg class="ic g10"><use href="#al3"/></svg>
          <svg class="ic g9"><use href="#al4"/></svg>
          <svg class="ic g9"><use href="#al5"/></svg>
          <svg class="ic g9"><use href="#al6"/></svg>
          <div class="sepv g7"></div>
          <svg class="ic g9"><use href="#al7"/></svg>
          <div class="sepv g7"></div>
          <svg class="ic g8"><use href="#al8"/></svg>
          <div class="sepv g8"></div>
          <div class="actbtn g5"><svg class="ic"><use href="#bring"/></svg></div>
        </div>
        <div class="tb5 d-flex">
          <div class="actbtn g5"><svg class="ic"><use href="#ptr"/></svg></div>
          <svg class="ic g4"><use href="#note"/></svg>
          <svg class="ic g9"><use href="#okb"/></svg>
          <svg class="ic g9"><use href="#chk"/></svg>
          <svg class="ic g9"><use href="#rad"/></svg>
          <svg class="ic g9"><use href="#grp"/></svg>
          <svg class="ic g9"><use href="#shd"/></svg>
          <svg class="ic g9"><use href="#pic"/></svg>
          <svg class="ic g9"><use href="#abbx"/></svg>
          <svg class="ic g9"><use href="#lst1"/></svg>
          <svg class="ic g9"><use href="#lst2"/></svg>
          <svg class="ic g9"><use href="#opts"/></svg>
          <svg class="ic g9"><use href="#tre2"/></svg>
          <svg class="ic g9"><use href="#spinh"/></svg>
          <svg class="ic g9"><use href="#spinv"/></svg>
          <svg class="ic g9"><use href="#fold"/></svg>
          <svg class="ic g9"><use href="#prog"/></svg>
          <svg class="ic g9"><use href="#trak"/></svg>
          <svg class="ic g9"><use href="#updn"/></svg>
          <svg class="ic g9"><use href="#hdr1"/></svg>
          <svg class="ic g9"><use href="#hdr2"/></svg>
          <svg class="ic g9"><use href="#cols"/></svg>
          <svg class="ic g9"><use href="#anim"/></svg>
          <svg class="ic g9"><use href="#tabc"/></svg>
          <svg class="ic g9"><use href="#cald"/></svg>
          <svg class="ic g9"><use href="#cal2"/></svg>
          <svg class="ic g9"><use href="#rich"/></svg>
          <svg class="ic g9"><use href="#ipad"/></svg>
          <svg class="ic g9"><use href="#ipb"/></svg>
          <svg class="ic g9"><use href="#film"/></svg>
          <svg class="ic g9"><use href="#user"/></svg>
        </div>
        <div class="canvas">
          <div class="dlgframe">
            <div class="dlg">
              <div class="dlgtitle"></div>
              <div class="dlgx"><svg width="16" height="10"><use href="#dx2"/></svg></div>
              <div class="lbl" style="top:44px">用户类型</div>
              <div class="lbl" style="top:79px">用户名称</div>
              <div class="lbl" style="top:112px">用户密码</div>
              <div class="lbl" style="top:147px">确认密码</div>
              <div class="fld cmb" style="top:43px"><span class="cmbb"><svg class="chev"><use href="#cd"/></svg></span></div>
              <div class="fld" style="top:74px">вообщем как-то так</div>
              <div class="fld dots" style="top:109px">&#8226;&#8226;&#8226;&#8226;&#8226;&#8226;&#8226;&#8226;</div>
              <div class="fld" style="top:144px"></div>
              <i class="hnd" style="left:122px;top:72px"></i><i class="hnd" style="left:204px;top:72px"></i><i class="hnd" style="left:286px;top:72px"></i>
              <i class="hnd" style="left:122px;top:83px"></i><i class="hnd" style="left:286px;top:83px"></i>
              <i class="hnd" style="left:122px;top:94px"></i><i class="hnd" style="left:204px;top:94px"></i><i class="hnd" style="left:286px;top:94px"></i>
              <div class="btnx btnok">确定</div>
              <div class="btnx btnno">退出</div>
            </div>
          </div>
        </div>
        <div class="tabs d-flex">
          <div class="tabi tabon"><svg class="ic"><use href="#dlgi"/></svg>Обычный просмотр</div>
          <div class="tabi tabt g3"><svg class="ic"><use href="#bini"/></svg>В бинарном виде</div>
          <div class="tabi tabt"><svg class="ic"><use href="#scr"/></svg>В виде скрипта</div>
        </div>
      </section>
    </div>
    <div class="bottomp">
      <div class="loghead"><svg class="logx" width="14" height="11" viewBox="0 0 14 11"><path d="M3 1l8 8M11 1l-8 8" stroke="#777" stroke-width="2"/></svg></div>
      <div class="logbody d-flex">
        <div class="loglines">
          <div class="lline">Data Directory содержит Import Address Table.</div>
          <div class="lline">Data Directory содержит Delay Import Descriptor.</div>
          <div class="lline">Компилятор: Microsoft Visual C++ 8.x (2005)</div>
          <div class="lcur">Готово.</div>
        </div>
        <div class="logsb"><svg class="chev"><use href="#cv"/></svg><div class="th-l"></div><svg class="chev mt-1"><use href="#cd"/></svg></div>
      </div>
    </div>
  </main>
</div>
<div class="statusb"><span>Д</span><span>Bl</span></div>
<script src="https://cdn.jsdelivr.net/npm/bootstrap@5.3.0/dist/js/bootstrap.bundle.min.js"></script>
</body>
</html>
